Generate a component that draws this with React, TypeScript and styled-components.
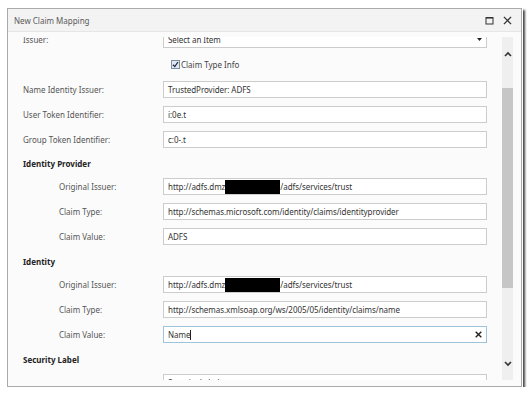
import React from 'react';
import styled, { createGlobalStyle } from 'styled-components';

const GlobalStyle = createGlobalStyle`
    html, body {
        margin: 0;
        background: #ffffff;
    }
    body {
        font-family: 'Noto Sans', 'Open Sans', sans-serif;
    }
`;

const Page = styled.div`
    padding: 8px 0 0 7px;
`;

const Dialog = styled.div`
    width: 515px;
    height: 379px;
    box-sizing: border-box;
    border: 1px solid #aaaaaa;
    background: #fbfbfb;
    display: flex;
    flex-direction: column;
    box-shadow: 0 0 0 1px #ffffff, 2px 3px 2px 1px rgba(40, 40, 40, 0.85);
`;

const TitleBar = styled.div`
    height: 23px;
    box-sizing: border-box;
    display: flex;
    align-items: center;
    padding: 0 9px 0 6px;
    background: #f3f3f3;
    border-bottom: 1px solid #e6e6e6;
`;

const Title = styled.span`
    flex: 1;
    font-size: 8px;
    color: #5a5a5a;
`;

const TitleButton = styled.span`
    display: flex;
    width: 9px;
    height: 9px;
    margin-left: 9px;
    color: #333;
`;

const Body = styled.div`
    flex: 1;
    min-height: 0;
    display: flex;
    padding: 5px 8px 6px 0;
`;

const Viewport = styled.div`
    flex: 1;
    overflow: hidden;
`;

const Form = styled.div`
    margin-top: -6px;
    padding-left: 15px;
    display: grid;
    grid-template-columns: 140px 324px;
    row-gap: 8px;
    align-items: center;
`;

const Label = styled.div<{ $nested?: boolean }>`
    padding-left: ${({ $nested }) => ($nested ? '36px' : '0')};
    font-size: 8px;
    color: #555;
`;

const Heading = styled.div<{ $extra?: number }>`
    grid-column: 1 / span 2;
    height: ${({ $extra }) => 14 + ($extra ?? 0)}px;
    display: flex;
    align-items: flex-end;
    font-size: 8px;
    line-height: 12px;
    font-weight: 700;
    color: #222;
`;

const Field = styled.div<{ $focused?: boolean }>`
    height: 17px;
    box-sizing: border-box;
    display: flex;
    align-items: center;
    padding: 0 4px;
    background: #ffffff;
    border: 1px solid ${({ $focused }) => ($focused ? '#9dc3dd' : '#cccccc')};
    font-size: 8px;
    letter-spacing: -0.05px;
    color: #333;
    white-space: nowrap;
`;

const FieldText = styled.span`
    flex: 1;
    display: flex;
    align-items: center;
`;

const Redacted = styled.span`
    display: inline-block;
    width: 55px;
    height: 14px;
    background: #000;
`;

const Caret = styled.span`
    display: inline-block;
    width: 1px;
    height: 10px;
    background: #222;
`;

const FieldIcon = styled.span`
    display: flex;
    margin-left: 4px;
    color: #222;
`;

const CheckRow = styled.label`
    grid-column: 2;
    height: 17px;
    display: flex;
    align-items: center;
    padding-left: 8px;
    font-size: 8px;
    color: #444;
`;

const CheckBox = styled.span`
    width: 9px;
    height: 9px;
    box-sizing: border-box;
    margin-right: 1px;
    display: flex;
    align-items: center;
    justify-content: center;
    border: 1px solid #7d8ea3;
    background: #dfe8f3;
    color: #1d2a3a;
`;

const ScrollBar = styled.div`
    width: 11px;
    display: flex;
    flex-direction: column;
    background: #efefef;
`;

const ScrollArrow = styled.div`
    height: 33px;
    display: flex;
    align-items: center;
    justify-content: center;
    color: #333;
`;

const ScrollTrack = styled.div`
    flex: 1;
    display: flex;
    flex-direction: column;
`;

const Thumb = styled.div<{ $top: number; $size: number }>`
    margin-top: ${({ $top }) => $top}px;
    height: ${({ $size }) => $size}px;
    background: #c6c6c6;
`;

const Chevron = ({ up }: { up?: boolean }) => (
    <svg width="8" height="6" viewBox="0 0 8 6">
        <polyline
            points={up ? '1,5 4,2 7,5' : '1,1 4,4 7,1'}
            fill="none"
            stroke="currentColor"
            strokeWidth="1.6"
        />
    </svg>
);

const Cross = ({ size, weight }: { size: number; weight: number }) => (
    <svg width={size} height={size} viewBox="0 0 10 10">
        <path d="M1 1 L9 9 M9 1 L1 9" stroke="currentColor" strokeWidth={weight} fill="none" />
    </svg>
);

type Row =
    | { kind: 'heading'; text: string; extra?: number }
    | { kind: 'field'; label: string; nested?: boolean; value: React.ReactNode; focused?: boolean; icon?: React.ReactNode };

const issuer = (
    <>
        http://adfs.dmz<Redacted />/adfs/services/trust
    </>
);

const rowsAfterCheck: Row[] = [
    { kind: 'field', label: 'Name Identity Issuer:', value: 'TrustedProvider: ADFS' },
    { kind: 'field', label: 'User Token Identifier:', value: 'i:0e.t' },
    { kind: 'field', label: 'Group Token Identifier:', value: 'c:0-.t' },
    { kind: 'heading', text: 'Identity Provider' },
    { kind: 'field', label: 'Original Issuer:', nested: true, value: issuer },
    { kind: 'field', label: 'Claim Type:', nested: true, value: 'http://schemas.microsoft.com/identity/claims/identityprovider' },
    { kind: 'field', label: 'Claim Value:', nested: true, value: 'ADFS' },
    { kind: 'heading', text: 'Identity', extra: 1 },
    { kind: 'field', label: 'Original Issuer:', nested: true, value: issuer },
    { kind: 'field', label: 'Claim Type:', nested: true, value: 'http://schemas.xmlsoap.org/ws/2005/05/identity/claims/name' },
    {
        kind: 'field',
        label: 'Claim Value:',
        nested: true,
        focused: true,
        value: <>Name<Caret /></>,
        icon: <Cross size={7} weight={2} />,
    },
    { kind: 'heading', text: 'Security Label', extra: 1 },
    { kind: 'field', label: '', nested: true, value: 'Security Label' },
];

const renderRow = (row: Row, i: number) => {
    if (row.kind === 'heading') {
        return <Heading key={i} $extra={row.extra}>{row.text}</Heading>;
    }
    return (
        <React.Fragment key={i}>
            <Label $nested={row.nested}>{row.label}</Label>
            <Field $focused={row.focused}>
                <FieldText>{row.value}</FieldText>
                {row.icon && <FieldIcon>{row.icon}</FieldIcon>}
            </Field>
        </React.Fragment>
    );
};

const App = () => {
    // thumb placement for the current scroll position of the form
    const thumbTop = 18;
    const thumbSize = 200;

    return (
        <Page>
            <GlobalStyle />
            <Dialog>
                <TitleBar>
                    <Title>New Claim Mapping</Title>
                    <TitleButton>
                        <svg width="9" height="9" viewBox="0 0 9 9">
                            <rect x="1" y="1.5" width="7" height="6.5" fill="none" stroke="currentColor" strokeWidth="1" />
                            <line x1="1" y1="1.8" x2="8" y2="1.8" stroke="currentColor" strokeWidth="1.6" />
                        </svg>
                    </TitleButton>
                    <TitleButton>
                        <Cross size={9} weight={1.4} />
                    </TitleButton>
                </TitleBar>
                <Body>
                    <Viewport>
                        <Form>
                            <Label>Issuer:</Label>
                            <Field>
                                <FieldText>Select an Item</FieldText>
                                <FieldIcon>
                                    <svg width="5" height="3" viewBox="0 0 5 3">
                                        <path d="M0 0 L5 0 L2.5 3 Z" fill="currentColor" />
                                    </svg>
                                </FieldIcon>
                            </Field>
                            <CheckRow>
                                <CheckBox>
                                    <svg width="7" height="7" viewBox="0 0 7 7">
                                        <polyline points="1,3.8 2.8,5.6 6,1" fill="none" stroke="currentColor" strokeWidth="1.3" />
                                    </svg>
                                </CheckBox>
                                Claim Type Info
                            </CheckRow>
                            {rowsAfterCheck.map(renderRow)}
                        </Form>
                    </Viewport>
                    <ScrollBar>
                        <ScrollArrow>
                            <Chevron up />
                        </ScrollArrow>
                        <ScrollTrack>
                            <Thumb $top={thumbTop} $size={thumbSize} />
                        </ScrollTrack>
                        <ScrollArrow>
                            <Chevron />
                        </ScrollArrow>
                    </ScrollBar>
                </Body>
            </Dialog>
        </Page>
    );
};

export default App;
